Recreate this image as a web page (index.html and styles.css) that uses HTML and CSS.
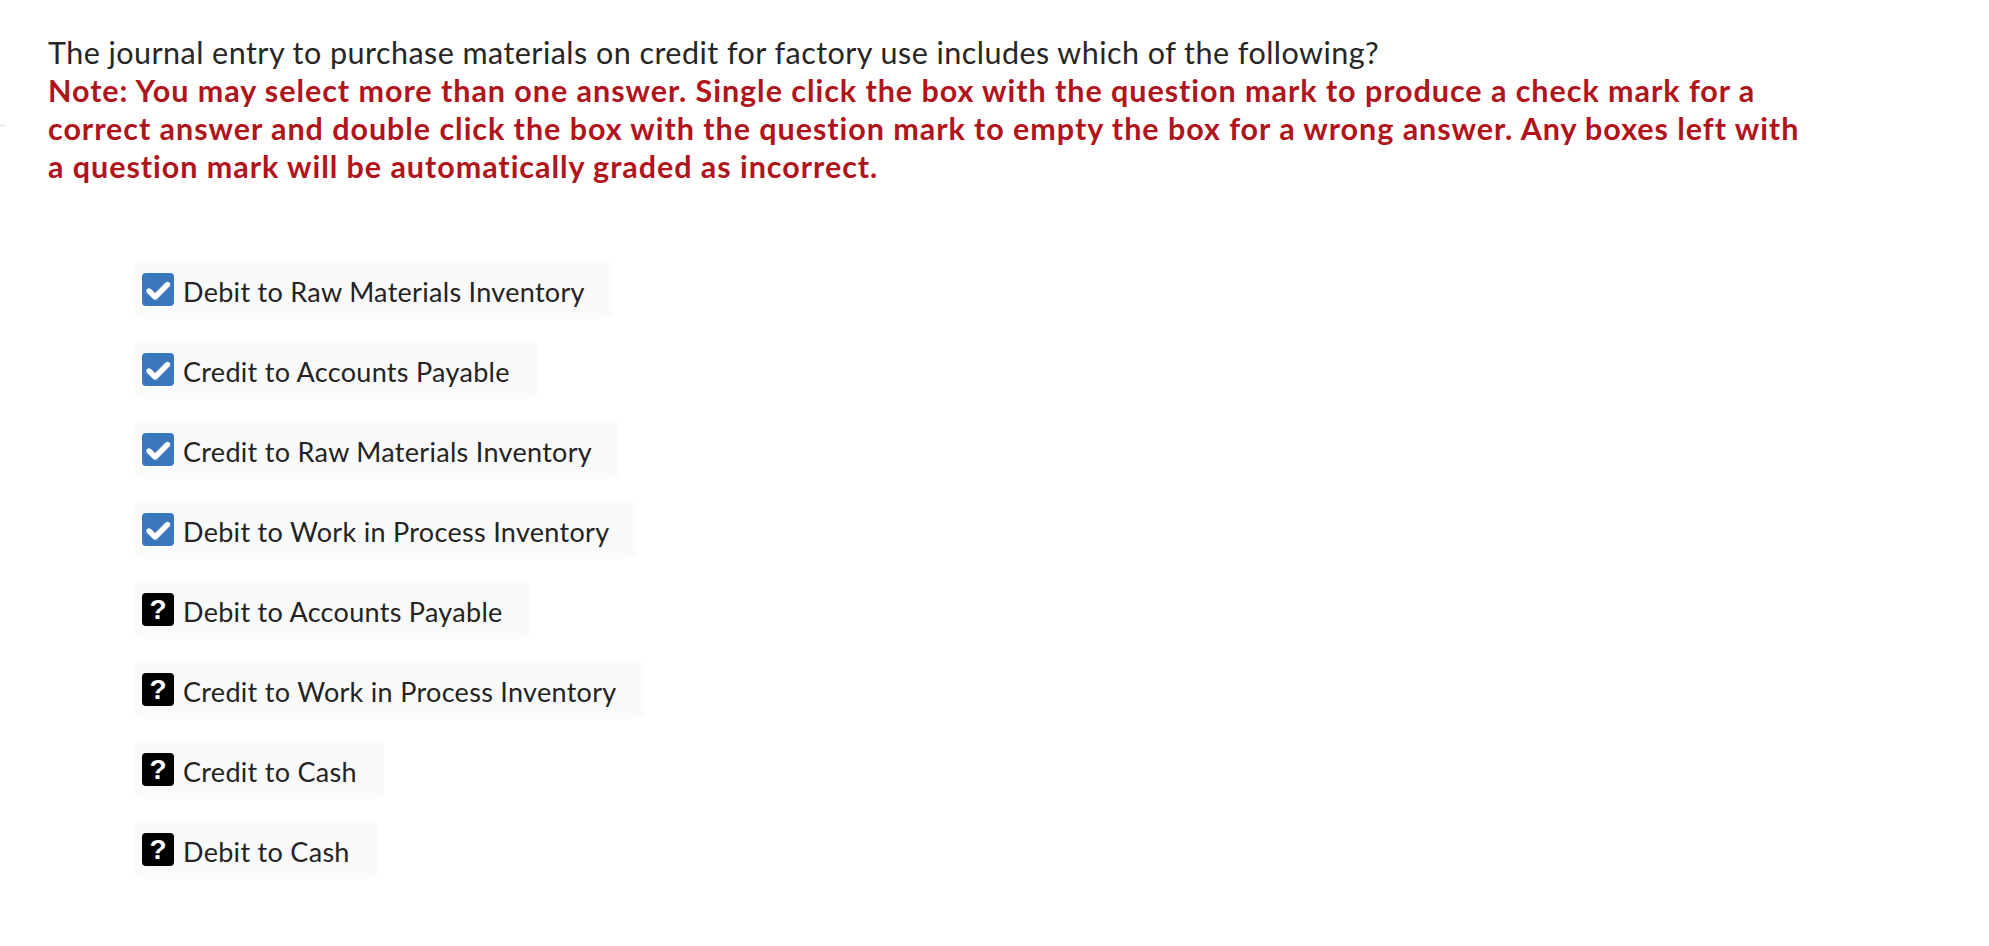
FILE: index.html
```html
<!DOCTYPE html>
<html lang="en">
<head>
<meta charset="utf-8">
<title>Question</title>
<link rel="stylesheet" href="styles.css">
</head>
<body>
<div class="edge-mark"></div>
<main class="question">
  <div class="prompt">
    <p class="stem">The journal entry to purchase materials on credit for factory use includes which of the following?</p>
    <p class="note">Note: You may select more than one answer. Single click the box with the question mark to produce a check mark for a correct answer and double click the box with the question mark to empty the box for a wrong answer. Any boxes left with a question mark will be automatically graded as incorrect.</p>
  </div>
  <ul class="choices">
    <li class="choice"><span class="box checked"><svg viewBox="0 0 32 33" width="32" height="33"><path d="M7 18 L13.2 24 L25.5 11.5" fill="none" stroke="#fff" stroke-width="5.4" stroke-linecap="round" stroke-linejoin="round"/></svg></span><span class="label">Debit to Raw Materials Inventory</span></li>
    <li class="choice"><span class="box checked"><svg viewBox="0 0 32 33" width="32" height="33"><path d="M7 18 L13.2 24 L25.5 11.5" fill="none" stroke="#fff" stroke-width="5.4" stroke-linecap="round" stroke-linejoin="round"/></svg></span><span class="label">Credit to Accounts Payable</span></li>
    <li class="choice"><span class="box checked"><svg viewBox="0 0 32 33" width="32" height="33"><path d="M7 18 L13.2 24 L25.5 11.5" fill="none" stroke="#fff" stroke-width="5.4" stroke-linecap="round" stroke-linejoin="round"/></svg></span><span class="label">Credit to Raw Materials Inventory</span></li>
    <li class="choice"><span class="box checked"><svg viewBox="0 0 32 33" width="32" height="33"><path d="M7 18 L13.2 24 L25.5 11.5" fill="none" stroke="#fff" stroke-width="5.4" stroke-linecap="round" stroke-linejoin="round"/></svg></span><span class="label">Debit to Work in Process Inventory</span></li>
    <li class="choice"><span class="box unknown">?</span><span class="label">Debit to Accounts Payable</span></li>
    <li class="choice"><span class="box unknown">?</span><span class="label">Credit to Work in Process Inventory</span></li>
    <li class="choice"><span class="box unknown">?</span><span class="label">Credit to Cash</span></li>
    <li class="choice"><span class="box unknown">?</span><span class="label">Debit to Cash</span></li>
  </ul>
</main>
</body>
</html>
```
FILE: styles.css
```css
html, body {
  margin: 0;
  padding: 0;
  background: #ffffff;
}
body {
  font-family: "Lato", "Liberation Sans", sans-serif;
  color: #232323;
  position: relative;
}
.edge-mark {
  position: absolute;
  left: 0;
  top: 125px;
  width: 6px;
  height: 1px;
  background: #e2e2e2;
}
.question {
  padding: 33px 0 0 48px;
  width: 1758px;
}
.prompt p {
  margin: 0;
  font-size: 30.5px;
  line-height: 38px;
}
.stem {
  font-weight: 400;
  color: #262626;
  letter-spacing: 0.46px;
}
.note {
  font-weight: 700;
  color: #b1141b;
  letter-spacing: 0.95px;
}
.choices {
  list-style: none;
  margin: 75px 0 0 86px;
  padding: 0;
  display: flex;
  flex-direction: column;
  align-items: flex-start;
  gap: 21px;
}
.choice {
  display: flex;
  align-items: center;
  height: 59px;
  padding: 0 27px 0 8px;
  background: #fafafa;
  border-radius: 6px;
  box-sizing: border-box;
}
.box {
  width: 32px;
  height: 33px;
  border-radius: 4px;
  display: flex;
  align-items: center;
  justify-content: center;
  flex: none;
}
.box svg {
  display: block;
}
.box.checked {
  background: #3a77bd;
}
.box.unknown {
  background: #000000;
  color: #ffffff;
  font-family: "Liberation Sans", sans-serif;
  font-weight: 700;
  font-size: 28px;
  line-height: 1;
}
.label {
  margin-left: 9px;
  font-size: 27px;
  line-height: 34px;
  letter-spacing: 0.3px;
  color: #232323;
  padding-top: 4px;
}
```
